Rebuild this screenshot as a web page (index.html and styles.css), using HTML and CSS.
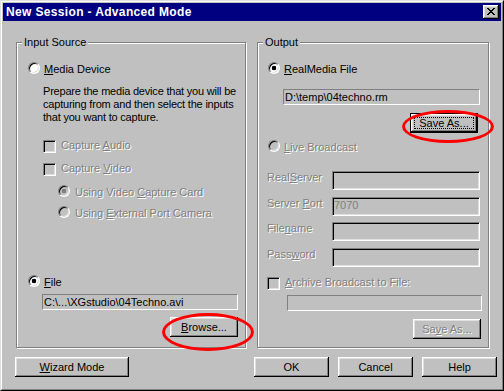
FILE: index.html
```html
<!DOCTYPE html>
<html>
<head>
<meta charset="utf-8">
<link rel="stylesheet" href="styles.css">
</head>
<body>
<div class="window">
  <div class="frame">
    <div class="titlebar">
      <span class="title">New Session - Advanced Mode</span>
      <button class="close" aria-label="Close">
        <svg width="8" height="7" viewBox="0 0 8 7" shape-rendering="crispEdges"><path fill="#000" d="M0 0h2v1H0z M6 0h2v1H6z M1 1h2v1H1z M5 1h2v1H5z M2 2h4v1H2z M3 3h2v1H3z M2 4h4v1H2z M1 5h2v1H1z M5 5h2v1H5z M0 6h2v1H0z M6 6h2v1H6z"/></svg>
      </button>
    </div>

    <div class="groups">
      <div class="group group-input">
        <span class="legend">Input Source</span>
        <div class="opt opt-media"><span class="radio"></span><span><u>M</u>edia Device</span></div>
        <p class="desc">Prepare the media device that you will be<br>capturing from and then select the inputs<br>that you want to capture.</p>
        <div class="opt opt-audio dis"><span class="check"></span><span>Capture <u>A</u>udio</span></div>
        <div class="opt opt-video dis"><span class="check"></span><span>Capture <u>V</u>ideo</span></div>
        <div class="opt opt-card dis"><span class="radio on-dis"></span><span>Using Video <u>C</u>apture Card</span></div>
        <div class="opt opt-camera dis"><span class="radio off-dis"></span><span>Using <u>E</u>xternal Port Camera</span></div>
        <div class="opt opt-file"><span class="radio on"></span><span><u>F</u>ile</span></div>
        <div class="path path-file">C:\...\XGstudio\04Techno.avi</div>
        <button class="btn btn-browse annot annot-browse"><span><u>B</u>rowse...</span></button>
      </div>

      <div class="group group-output">
        <span class="legend">Output</span>
        <div class="opt opt-rm"><span class="radio on"></span><span><u>R</u>ealMedia File</span></div>
        <div class="path path-rm">D:\temp\04techno.rm</div>
        <button class="btn default btn-saveas annot annot-saveas"><span>Save As...</span></button>
        <div class="opt opt-live dis"><span class="radio off-dis"></span><span><u>L</u>ive Broadcast</span></div>
        <div class="field-row fr-server"><span class="flabel dis">Real<u>S</u>erver</span><span class="edit"></span></div>
        <div class="field-row fr-port"><span class="flabel dis">Server <u>P</u>ort</span><span class="edit">7070</span></div>
        <div class="field-row fr-name"><span class="flabel dis">File<u>n</u>ame</span><span class="edit"></span></div>
        <div class="field-row fr-pass"><span class="flabel dis">Pass<u>w</u>ord</span><span class="edit"></span></div>
        <div class="opt opt-archive dis"><span class="check"></span><span><u>A</u>rchive Broadcast to File:</span></div>
        <div class="path path-archive"></div>
        <button class="btn dis btn-saveas2"><span>Sa<u>v</u>e As...</span></button>
      </div>
    </div>

    <div class="actions">
      <button class="btn btn-wizard"><span><u>W</u>izard Mode</span></button>
      <button class="btn btn-ok"><span>OK</span></button>
      <button class="btn btn-std"><span>Cancel</span></button>
      <button class="btn btn-std"><span>Help</span></button>
    </div>
  </div>
</div>
</body>
</html>
```

FILE: styles.css
```css
* { box-sizing: border-box; }
html, body { margin: 0; padding: 0; }
body {
  width: 504px;
  height: 391px;
  overflow: hidden;
  background: #c0c0c0;
  font-family: "Liberation Sans", Arial, sans-serif;
  font-size: 11px;
  color: #000;
}

.window {
  width: 504px;
  height: 391px;
  border: 1px solid;
  border-color: #dfdfdf #000 #000 #dfdfdf;
  background: #c0c0c0;
}
.frame {
  height: 100%;
  border: 1px solid;
  border-color: #fff #808080 #808080 #fff;
  padding: 1px;
  display: flex;
  flex-direction: column;
}

/* title bar */
.titlebar {
  flex: none;
  height: 18px;
  background: #000080;
  display: flex;
  align-items: flex-start;
  justify-content: space-between;
  padding: 0 2px 0 3px;
}
.title {
  color: #fff;
  font-weight: bold;
  font-size: 12px;
  line-height: 18px;
  letter-spacing: 0.35px;
  white-space: nowrap;
}
.close {
  width: 16px;
  height: 14px;
  margin-top: 2px;
  padding: 3px 0 0 0;
  border: 0;
  background: #c0c0c0;
  box-shadow: inset -1px -1px #000, inset 1px 1px #fff, inset -2px -2px #808080, inset 2px 2px #dfdfdf;
  display: flex;
  align-items: flex-start;
  justify-content: center;
}
.close svg { display: block; }

/* group boxes */
.groups {
  flex: none;
  display: flex;
  gap: 11px;
  margin-top: 21px;
  padding-left: 13px;
}
.group {
  position: relative;
  height: 306px;
  border: 1px solid #808080;
  box-shadow: inset 1px 1px #fff, 1px 1px #fff;
  display: flex;
  flex-direction: column;
  align-items: flex-start;
}
.group-input { width: 230px; }
.group-output { width: 232px; }
.legend {
  position: absolute;
  top: -7px;
  left: 5px;
  padding: 0 2px;
  background: #c0c0c0;
  line-height: 13px;
  white-space: nowrap;
}

/* options */
.opt {
  display: flex;
  align-items: flex-start;
  height: 13px;
  line-height: 13px;
  white-space: nowrap;
  gap: 5px;
}
.dis { color: #808080; text-shadow: 1px 1px 0 #fff; }

.radio {
  flex: none;
  width: 12px;
  height: 12px;
  margin-top: -1px;
  border-radius: 50%;
  border: 1px solid;
  border-color: #808080 #fff #fff #808080;
  background: #fff;
  box-shadow: inset 1px 1px #000, inset -1px -1px #dfdfdf;
}
.radio.on { background: radial-gradient(circle at center, #000 0 2px, #fff 2.6px); }
.radio.off-dis { background: #c0c0c0; }
.radio.on-dis { background: radial-gradient(circle at center, #808080 0 2px, #c0c0c0 2.6px); }

.check {
  flex: none;
  width: 13px;
  height: 13px;
  margin-top: 1px;
  border: 1px solid;
  border-color: #808080 #fff #fff #808080;
  box-shadow: inset 1px 1px #000, inset -1px -1px #dfdfdf;
  background: #c0c0c0;
}

.desc {
  margin: 9px 0 0 26px;
  line-height: 13px;
  letter-spacing: -0.2px;
  white-space: nowrap;
}

.opt-media { margin: 20px 0 0 11px; gap: 4px; }
.opt-audio { margin: 15px 0 0 26px; }
.opt-video { margin: 10px 0 0 26px; }
.opt-card { margin: 11px 0 0 41px; }
.opt-camera { margin: 8px 0 0 41px; }
.opt-file { margin: 56px 0 0 11px; gap: 4px; }

.opt-rm { margin: 20px 0 0 10px; gap: 4px; }
.opt-live { margin: 8px 0 0 10px; gap: 4px; }
.opt-archive { margin: 9px 0 0 9px; }

/* text fields */
.path {
  height: 16px;
  border: 1px solid;
  border-color: #808080 #fff #fff #808080;
  background: #c0c0c0;
  padding-left: 1px;
  line-height: 14px;
  white-space: nowrap;
  overflow: hidden;
}
.path-file { margin: 5px 0 0 25px; width: 196px; }
.path-rm { margin: 13px 0 0 25px; width: 197px; }
.path-archive { margin: 6px 0 0 29px; width: 195px; }

.field-row {
  display: flex;
  align-items: flex-start;
  margin-left: 9px;
}
.flabel {
  width: 65px;
  line-height: 13px;
  white-space: nowrap;
}
.edit {
  width: 148px;
  height: 19px;
  border: 1px solid;
  border-color: #808080 #fff #fff #808080;
  box-shadow: inset 1px 1px #000, inset -1px -1px #dfdfdf;
  background: #c0c0c0;
  padding-left: 1px;
  line-height: 15px;
  color: #808080;
}
.fr-server { margin-top: 17px; }
.fr-port { margin-top: 7px; }
.fr-name { margin-top: 6px; }
.fr-pass { margin-top: 7px; }

/* buttons */
.btn {
  position: relative;
  height: 20px;
  padding: 1px 0 0 0;
  border: 0;
  font: inherit;
  line-height: 13px;
  color: #000;
  background: #c0c0c0;
  box-shadow: inset -1px -1px #000, inset 1px 1px #fff, inset -2px -2px #808080, inset 2px 2px #dfdfdf;
  display: flex;
  align-items: center;
  justify-content: center;
  white-space: nowrap;
}
.btn.dis { color: #808080; text-shadow: 1px 1px 0 #fff; }
.btn.default {
  box-shadow: inset 0 0 0 1px #000, inset -2px -2px #000, inset 2px 2px #fff, inset -3px -3px #808080, inset 3px 3px #dfdfdf;
}
.btn.default::before {
  content: "";
  position: absolute;
  inset: 4px;
  border: 1px dotted #000;
}
.btn-browse { margin: 7px 0 0 153px; width: 68px; }
.btn-saveas { margin: 8px 0 0 152px; width: 68px; }
.btn-saveas2 { margin: 8px 0 0 155px; width: 68px; }

/* red annotation ellipses */
.annot::after {
  content: "";
  position: absolute;
  left: -8px;
  width: 86px;
  border: 3px solid #ff0000;
  border-radius: 50%;
  pointer-events: none;
}
.annot-browse::after { top: -4px; height: 32px; }
.annot-saveas::after { top: -3px; height: 27px; }

/* bottom buttons */
.actions {
  flex: none;
  display: flex;
  gap: 9px;
  margin-top: 9px;
  padding: 0 4px 0 12px;
}
.btn-wizard { width: 114px; }
.btn-ok { width: 75px; margin-left: auto; }
.btn-std { width: 75px; }
```
